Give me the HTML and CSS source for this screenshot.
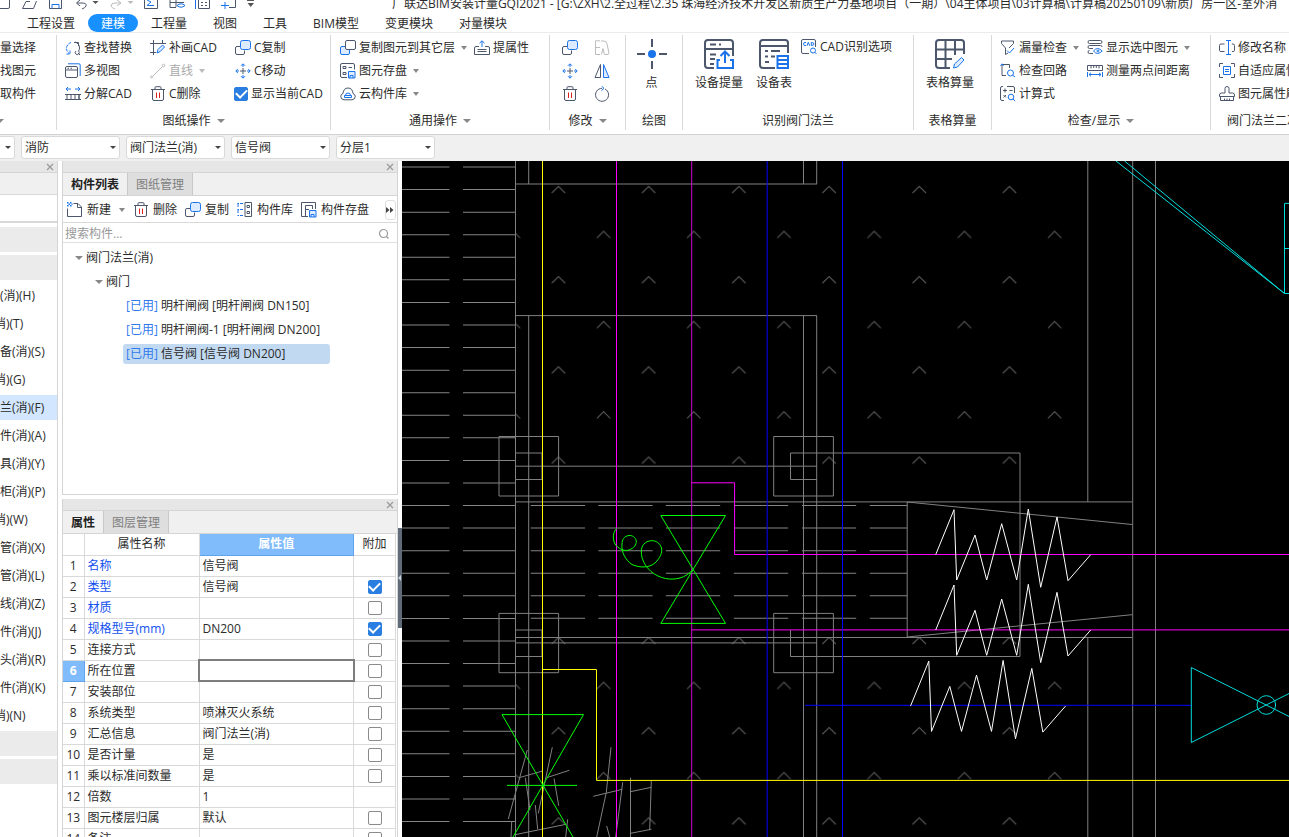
FILE: index.html
```html
<!DOCTYPE html>
<html lang="zh-CN">
<head>
<meta charset="utf-8">
<title>广联达BIM安装计量GQI2021</title>
<link rel="stylesheet" href="styles.css">
</head>
<body>
<svg class="defs" aria-hidden="true">
  <defs>
    <symbol id="i-find" viewBox="0 0 16 16"><path class="b" d="M6 2.500A6.500 6.500 0 0 0 1.500 8Q1.500 12 4.500 13.500M1.500 14H5V10.500" stroke-dasharray="3 1"/><path class="d" d="M9 2.500H13.500V6M10 2Q14.500 3.500 14.500 8Q14.500 10 13.500 11"/><path class="d" d="M13.500 11A2 2 0 1 1 11 11M13 13L15 15"/></symbol>
    <symbol id="i-views" viewBox="0 0 16 16"><rect class="d" x=".5" y="3.500" width="12" height="11" rx="1.500"/><path class="d" d="M.5 7H12.500M2.500 5.300H4M5.500 5.300H7"/><path class="b" d="M3 .8H14Q15.200.8 15.200 2V13"/></symbol>
    <symbol id="i-split" viewBox="0 0 16 16"><path class="b" d="M6 3H1M3 1L1 3L3 5M10 3H15M13 1L15 3L13 5"/><path class="d" d="M0 8.500H2V13.500H0M2 8.500H14V13.500H2M16 8.500H14V13.500H16M6 8.500V13.500M10 8.500V13.500"/></symbol>
    <symbol id="i-draw" viewBox="0 0 16 16"><path class="d" d="M3.500 0V15M0 3.500H16M12.500 0V4M0 12.500H6"/><path class="bf" d="M7 13L8 9.500L12.500 5L14.500 7L10 11.700Z"/></symbol>
    <symbol id="i-line" viewBox="0 0 16 16"><path class="g" d="M2.500 13.500L12.500 3.500"/><circle class="g" cx="1.500" cy="14" r="1"/><circle class="g" cx="13.500" cy="2.500" r="1.300"/></symbol>
    <symbol id="i-trash" viewBox="0 0 16 16"><path class="d" d="M1 3.500H15M5 3V1.500Q5 .7 6 .7H10Q11 .7 11 1.500V3M2.500 3.500V13Q2.500 14.500 4 14.500H12Q13.500 14.500 13.500 13V3.500"/><path class="r" d="M6.500 6.500V12M9.500 6.500V12"/></symbol>
    <symbol id="i-copy" viewBox="0 0 16 16"><path class="d" d="M5 6.500H2Q.5 6.500.5 8V13Q.5 14.500 2 14.500H8Q9.500 14.500 9.500 13V10.500"/><rect class="bf" x="5.500" y=".5" width="10" height="9" rx="2"/></symbol>
    <symbol id="i-copyl" viewBox="0 0 16 16"><rect class="bf" x=".5" y="6.500" width="9" height="8" rx="1.500"/><rect x="5.500" y=".5" width="10" height="9" rx="1.500" class="dw"/></symbol>
    <symbol id="i-move" viewBox="0 0 16 16"><path class="d" d="M8 5V11M5 8H11"/><path class="b" d="M8 4V1M6 2.800L8 .8L10 2.800M8 12V15M6 13.200L8 15.200L10 13.200M4 8H1M2.800 6L.8 8L2.800 10M12 8H15M13.200 6L15.200 8L13.200 10"/></symbol>
    <symbol id="i-disk" viewBox="0 0 16 16"><path class="d" d="M7 14.500H2Q.5 14.500.5 13V2Q.5.5 2 .5H13Q14.500.5 14.500 2V6.500M3 3.500H6V5.500H3ZM8.500 4.500H12M3 9.500H6V11.500H3Z"/><path class="bf" d="M8.500 8.500H15V15H8.500ZM10 15V12.500H13V15"/></symbol>
    <symbol id="i-cloud" viewBox="0 0 16 16"><path class="d" d="M4 13.800H12Q15.200 13.500 15.200 10.500Q15.200 8 13 7.500Q12.500 2 8 2Q3.500 2 3 7.500Q.8 8 .8 10.500Q.8 13.500 4 13.800Z"/><path class="b" d="M4.500 11.500H11.500V9.500H4.500ZM5.500 9.500Q5.500 7 8 7Q10.500 7 10.500 9.500"/></symbol>
    <symbol id="i-prop" viewBox="0 0 16 16"><path class="b" d="M8 7V1M5.500 3.200L8 .8L10.500 3.200"/><path class="d" d="M5 6.500H2Q.5 6.500.5 8V14.500H15.500V8Q15.500 6.500 14 6.500H11M3.500 9.500H12.500M3.500 11.500H12.500"/></symbol>
    <symbol id="i-copyx" viewBox="0 0 16 16"><path class="g" d="M6 .8H1.500V14.500H6M1.500 7.500H6M7 1H10Q12.500 1 13 4L15 13Q15 14.500 13 14.500H10.500L9 8.500L7.500 14.500"/></symbol>
    <symbol id="i-mirror" viewBox="0 0 16 16"><path class="d" d="M6.500 1.500V14.500H1Z"/><path class="bf" d="M9.500 1.500V14.500H15Z"/></symbol>
    <symbol id="i-rotate" viewBox="0 0 16 16"><path class="d" d="M8 2.300A6.500 6.500 0 1 0 11 3"/><path class="b" d="M7.500 0L10 2.300L7.500 4.500"/></symbol>
    <symbol id="i-cad" viewBox="0 0 16 16"><path class="d" d="M8 14.500H2Q.5 14.500.5 13V2Q.5.5 2 .5H13Q14.500.5 14.500 2V8"/><path class="b" d="M5 3.500Q2.500 2.800 2.500 5Q2.500 7 5 6.500M6 6.800L7.300 3.300L8.700 6.800M10.300 3.500V6.500Q13 6.500 13 5Q13 3.500 10.300 3.500"/><circle class="b" cx="12" cy="11.500" r="2.500"/><path class="b" d="M13.800 13.300L15.500 15"/></symbol>
    <symbol id="i-funnel" viewBox="0 0 16 16"><path class="d" d="M1.500 1H13.500V3.500L9 8M1.500 1V3.500L5.500 8V14.500L8 13"/><path class="b" d="M7 10.500L9.500 13L14 8"/></symbol>
    <symbol id="i-loop" viewBox="0 0 16 16"><path class="b" d="M.5 3L2 .8L3.500 3"/><path class="d" d="M2 2V12.500H6M3 1.500H9.500V5"/><circle class="b" cx="10.500" cy="10" r="3"/><path class="b" d="M12.500 12L15 14"/></symbol>
    <symbol id="i-calc" viewBox="0 0 16 16"><path class="d" d="M4 14.500H2Q.5 14.500.5 13V2Q.5.5 2 .5H3M7 .5H13Q14.500.5 14.500 2V7M3 4.500H7M5 2.500V6.500M9.500 4.500H12.500M3.500 9L6 11.500M6 9L3.500 11.500"/><circle class="b" cx="11" cy="11" r="2.800"/><path class="b" d="M13 13L15.200 15"/></symbol>
    <symbol id="i-show" viewBox="0 0 16 16"><path class="d" d="M2.500.5H13.500Q15 .5 15 2T13.500 3.500H2.500Q1 3.500 1 2T2.500.5M6 8.500H2.500Q1 8.500 1 7T2.500 5.500H13.500Q15 5.500 15 7M6 13.500H2.500Q1 13.500 1 12T2.500 10.500"/><path class="b" d="M6.500 11Q10.500 6 15.200 11Q10.500 16 6.500 11"/><circle class="b" cx="11" cy="11" r="1"/></symbol>
    <symbol id="i-ruler" viewBox="0 0 16 16"><path class="d" d="M.5 7.500V2.500H15.500V7.500ZM4 3V5.500M6.700 3V5M9.300 3V5M12 3V5.500"/><path class="b" d="M.5 9V14M15.500 9V14M2 11.500H14M4 9.800L2 11.500L4 13.300M12 9.800L14 11.500L12 13.300"/></symbol>
    <symbol id="i-rename" viewBox="0 0 16 16"><path class="d" d="M5.500 4H2Q.5 4 .5 5.500V10.500Q.5 11.500 2 11.500H5.500M13 4H14Q15.500 4 15.500 5.500V10.500Q15.500 11.500 14 11.500H13"/><path class="b" d="M7 .5H12M9.500 1V14.500M7 14.500H12"/></symbol>
    <symbol id="i-adapt" viewBox="0 0 16 16"><path class="d" d="M4 .5H.5V4M12 .5H15.500V4M4 14.500H.5V11M12 14.500H15.500V11"/><path class="b" d="M4.500 3.500H11.500V11.500H4.500ZM6 6.500H10M6 8.500H10"/></symbol>
    <symbol id="i-brush" viewBox="0 0 16 16"><path class="d" d="M6 7V2.500Q6 .5 8 .5T10 2.500V7H13.500Q15.500 7 15.500 9V10.500H.5V9Q.5 7 2.500 7ZM1.500 10.500V14.500H14.500V10.500M5.500 12.500V14.500M8 12.500V14.500M10.500 12.500V14.500"/></symbol>
    <symbol id="i-new" viewBox="0 0 16 16"><path class="d" d="M6.500 1.500H11L14.500 5V14.500H.5V6.500M10.500 1.500V5.500H14.500"/><path fill="#1a73e8" d="M0 0H1.500V1.500H0ZM3 0H4.500V1.500H3ZM1.500 1.500H3V3H1.500ZM4.500 1.500H5.500V3H4.500ZM0 3H1.500V4.500H0ZM3 3H4.500V4.500H3Z"/></symbol>
    <symbol id="i-lib" viewBox="0 0 16 16"><path class="d" d="M8 .5H14.500V14.500H8ZM10 3.500H12.500V5.500H10ZM10 9.500H12.500V11.500H10Z"/><path class="b" d="M.5 1.500H2M3 1.500H6M.5 7.500H2M3 7.500H6M.5 13.500H2M3 13.500H6M1 1.500V5M1 7.500V11"/></symbol>
    <symbol id="i-save" viewBox="0 0 16 16"><path class="d" d="M7 14.500H.5V.5H14.500V7M4.500 14.500V3.500H11.500V7M4.500 7.500H8"/><path class="bf" d="M8.500 8.500H15V15H8.500ZM10 15V12.500H13V15"/></symbol>
    <symbol id="i-close" viewBox="0 0 8 8"><path d="M1 1L7 7M7 1L1 7" stroke="#999" stroke-width="1.200" fill="none"/></symbol>
    <symbol id="i-search" viewBox="0 0 12 12"><circle cx="5.500" cy="5.500" r="4" stroke="#999" fill="none" stroke-width="1.200"/><path d="M8.500 8.500L10.500 10.500" stroke="#999" stroke-width="1.200"/></symbol>
  </defs>
</svg>

<header class="titlebar">
  <svg class="quick" width="260" height="12" viewBox="0 0 260 12" aria-hidden="true">
    <path class="d" d="M0 8.500H8Q9.500 8.500 9.500 7V0M22.500 8.500H33.500L36.500 1M22.500 8.500L26 1.500H30M49.500 0V8.500H61.500V0M77 3H82Q87 3 86 6Q85 8 82 9M80 0L76.500 3L80 6M144.500 0V8.500H157.500V0M170 7.500H176M170 0V7.500M176 0V7M170 2.500H184M198.500 0V8.500H209.500V0M201 2.500H203M205 2.500H207M201 5.500H203M205 5.500H207M229 7.500H235.500V0"/>
    <path class="b" d="M52 8.500V4.500H59V8.500M147 0L151 2L147 5.500H154M177 5.500Q181 2 185 5.500Q181 9 177 5.500M195.500 0V9M221 5.500H229M225 2V9"/>
    <path class="g" d="M121 3H115Q111 3 111 6Q112 8 115 9M117 0L121 3L117 6"/>
    <path fill="#555" d="M92.500 1H98.500L95.500 4ZM247.500 3H254L250.700 7ZM247 0H254V1H247Z"/><path fill="#bbb" d="M127.500 1H133.500L130.500 4Z"/>
  </svg>
  <span class="doc-title">广联达BIM安装计量GQI2021 - [G:\ZXH\2.全过程\2.35 珠海经济技术开发区新质生产力基地项目（一期）\04主体项目\03计算稿\计算稿20250109\新质厂房一区-室外消</span>
</header>

<nav class="tabs">
  <button>工程设置</button><button class="on">建模</button><button>工程量</button><button>视图</button><button>工具</button><button>BIM模型</button><button>变更模块</button><button>对量模块</button>
</nav>

<section class="ribbon">
  <div class="group g-select">
    <div class="rows"><button class="cmd">量选择</button><button class="cmd">找图元</button><button class="cmd">取构件</button></div>
    <button class="glabel" aria-label="选择"><i class="caret"></i></button>
  </div>
  <div class="group g-sheet">
    <div class="rows three">
      <button class="cmd"><svg><use href="#i-find"/></svg>查找替换</button><button class="cmd"><svg><use href="#i-draw"/></svg>补画CAD</button><button class="cmd"><svg><use href="#i-copy"/></svg>C复制</button>
      <button class="cmd"><svg><use href="#i-views"/></svg>多视图</button><button class="cmd" disabled><svg><use href="#i-line"/></svg>直线<i class="caret"></i></button><button class="cmd"><svg><use href="#i-move"/></svg>C移动</button>
      <button class="cmd"><svg><use href="#i-split"/></svg>分解CAD</button><button class="cmd"><svg><use href="#i-trash"/></svg>C删除</button><label class="cmd"><input type="checkbox" class="check" checked>显示当前CAD</label>
    </div>
    <button class="glabel">图纸操作<i class="caret"></i></button>
  </div>
  <div class="group g-common">
    <div class="rows two">
      <button class="cmd"><svg><use href="#i-copyl"/></svg>复制图元到其它层<i class="caret"></i></button><button class="cmd"><svg><use href="#i-prop"/></svg>提属性</button>
      <button class="cmd wide"><svg><use href="#i-disk"/></svg>图元存盘<i class="caret"></i></button>
      <button class="cmd wide"><svg><use href="#i-cloud"/></svg>云构件库<i class="caret"></i></button>
    </div>
    <button class="glabel">通用操作<i class="caret"></i></button>
  </div>
  <div class="group g-modify">
    <div class="rows pair">
      <button class="cmd" aria-label="复制"><svg><use href="#i-copy"/></svg></button><button class="cmd" aria-label="拉伸" disabled><svg><use href="#i-copyx"/></svg></button>
      <button class="cmd" aria-label="移动"><svg><use href="#i-move"/></svg></button><button class="cmd" aria-label="镜像"><svg><use href="#i-mirror"/></svg></button>
      <button class="cmd" aria-label="删除"><svg><use href="#i-trash"/></svg></button><button class="cmd" aria-label="旋转"><svg><use href="#i-rotate"/></svg></button>
    </div>
    <button class="glabel">修改<i class="caret"></i></button>
  </div>
  <div class="group g-point">
    <div class="bigs"><button class="big"><svg viewBox="0 0 30 30"><path class="D" d="M15 0V8M15 22V30M0 15H8M22 15H30"/><circle cx="15" cy="15" r="4" fill="#1a73e8"/></svg>点</button></div>
    <span class="glabel">绘图</span>
  </div>
  <div class="group g-device">
    <div class="bigs">
      <button class="big"><svg viewBox="0 0 30 30"><path class="D" d="M10 29H4Q1 29 1 26V4Q1 1 4 1H26Q29 1 29 4V17M1 10H29M6 5.500H12M15 5.500H17M6 15.500H12M6 20H11M6 25H10"/><path class="B" d="M16 21H13.500V29H29V21H26M21 24V13M16.500 17L21 12.500L25.500 17"/></svg>设备提量</button>
      <button class="big"><svg viewBox="0 0 30 30"><path class="D" d="M16 29H4Q1 29 1 26V4Q1 1 4 1H26Q29 1 29 4V14M1 7H29M6 12H9M12 12H21M6 17.500H9M12 17.500H16M6 23H10"/><path class="B" d="M18.500 17H29V29H18.500ZM18.500 21H29M18.500 25H29"/></svg>设备表</button>
      <button class="cmd"><svg><use href="#i-cad"/></svg>CAD识别选项</button>
    </div>
    <span class="glabel">识别阀门法兰</span>
  </div>
  <div class="group g-table">
    <div class="bigs"><button class="big"><svg viewBox="0 0 30 30"><path class="D" d="M15 29H4Q1 29 1 26V4Q1 1 4 1H26Q29 1 29 4V15M1 10.500H29M1 20H17M10.500 1V29M20 1V16"/><path class="bf" d="M18.500 29L19.500 25L26.500 18.500L29 21L22.500 28Z"/></svg>表格算量</button></div>
    <span class="glabel">表格算量</span>
  </div>
  <div class="group g-check">
    <div class="rows two">
      <button class="cmd"><svg><use href="#i-funnel"/></svg>漏量检查<i class="caret"></i></button><button class="cmd"><svg><use href="#i-show"/></svg>显示选中图元<i class="caret"></i></button>
      <button class="cmd"><svg><use href="#i-loop"/></svg>检查回路</button><button class="cmd"><svg><use href="#i-ruler"/></svg>测量两点间距离</button>
      <button class="cmd"><svg><use href="#i-calc"/></svg>计算式</button>
    </div>
    <button class="glabel">检查/显示<i class="caret"></i></button>
  </div>
  <div class="group g-valve">
    <div class="rows">
      <button class="cmd"><svg><use href="#i-rename"/></svg>修改名称</button>
      <button class="cmd"><svg><use href="#i-adapt"/></svg>自适应属性</button>
      <button class="cmd"><svg><use href="#i-brush"/></svg>图元属性刷</button>
    </div>
    <span class="glabel">阀门法兰二次</span>
  </div>
</section>

<section class="filters">
  <span class="pick first"><select aria-label="楼层"><option></option></select></span>
  <span class="pick"><select aria-label="专业"><option>消防</option></select></span>
  <span class="pick"><select aria-label="构件类型"><option>阀门法兰(消)</option></select></span>
  <span class="pick"><select aria-label="构件"><option>信号阀</option></select></span>
  <span class="pick"><select aria-label="分层"><option>分层1</option></select></span>
</section>

<main class="work">
  <aside class="nav">
    <div class="dock"><button aria-label="关闭"><svg><use href="#i-close"/></svg></button></div>
    <div class="nav-tab"></div>
    <div class="nav-tools"></div>
    <ul class="nav-list">
      <li class="bar"></li><li class="bar"></li>
      <li>(消)(H)</li><li class="cut">消)(T)</li><li>备(消)(S)</li><li class="cut">消)(G)</li><li class="on">兰(消)(F)</li><li>件(消)(A)</li><li>具(消)(Y)</li><li>柜(消)(P)</li><li class="cut">消)(W)</li><li>管(消)(X)</li><li>管(消)(L)</li><li>线(消)(Z)</li><li>件(消)(J)</li><li>头(消)(R)</li><li>件(消)(K)</li><li class="cut">消)(N)</li>
      <li class="bar"></li><li class="bar"></li>
    </ul>
  </aside>

  <div class="panels">
    <section class="panel parts">
      <div class="dock"><button aria-label="关闭"><svg><use href="#i-close"/></svg></button></div>
      <div class="ptabs"><button class="on">构件列表</button><button>图纸管理</button></div>
      <div class="tools">
        <button class="cmd"><svg><use href="#i-new"/></svg>新建<i class="caret"></i></button>
        <button class="cmd"><svg><use href="#i-trash"/></svg>删除</button>
        <button class="cmd"><svg><use href="#i-copy"/></svg>复制</button>
        <button class="cmd"><svg><use href="#i-lib"/></svg>构件库</button>
        <button class="cmd"><svg><use href="#i-save"/></svg>构件存盘</button>
        <button class="more" aria-label="更多"><svg viewBox="0 0 8 6"><path fill="#444" d="M0 0L3.500 3L0 6ZM4 0L7.500 3L4 6Z"/></svg></button>
      </div>
      <div class="search"><input type="text" placeholder="搜索构件..." aria-label="搜索构件"><svg><use href="#i-search"/></svg></div>
      <ul class="tree">
        <li class="l1"><i class="caret"></i>阀门法兰(消)</li>
        <li class="l2"><i class="caret"></i>阀门</li>
        <li class="l3"><b>[已用]</b> 明杆闸阀 [明杆闸阀 DN150]</li>
        <li class="l3"><b>[已用]</b> 明杆闸阀-1 [明杆闸阀 DN200]</li>
        <li class="l3 on"><b>[已用]</b> 信号阀 [信号阀 DN200]</li>
      </ul>
    </section>

    <section class="panel props">
      <div class="dock"><button aria-label="关闭"><svg><use href="#i-close"/></svg></button></div>
      <div class="ptabs"><button class="on">属性</button><button>图层管理</button></div>
      <div class="grid-wrap">
      <table class="grid">
        <colgroup><col class="c-no"><col class="c-name"><col><col class="c-add"></colgroup>
        <thead><tr><th></th><th>属性名称</th><th class="hot">属性值</th><th>附加</th></tr></thead>
        <tbody>
          <tr><td>1</td><td class="key">名称</td><td>信号阀</td><td></td></tr>
          <tr><td>2</td><td class="key">类型</td><td>信号阀</td><td><input type="checkbox" class="check" aria-label="类型" checked></td></tr>
          <tr><td>3</td><td class="key">材质</td><td></td><td><input type="checkbox" class="check" aria-label="材质"></td></tr>
          <tr><td>4</td><td class="key">规格型号(mm)</td><td>DN200</td><td><input type="checkbox" class="check" aria-label="规格型号" checked></td></tr>
          <tr><td>5</td><td>连接方式</td><td></td><td><input type="checkbox" class="check" aria-label="连接方式"></td></tr>
          <tr><td class="hot">6</td><td>所在位置</td><td class="edit"></td><td><input type="checkbox" class="check" aria-label="所在位置"></td></tr>
          <tr><td>7</td><td>安装部位</td><td></td><td><input type="checkbox" class="check" aria-label="安装部位"></td></tr>
          <tr><td>8</td><td>系统类型</td><td>喷淋灭火系统</td><td><input type="checkbox" class="check" aria-label="系统类型"></td></tr>
          <tr><td>9</td><td>汇总信息</td><td>阀门法兰(消)</td><td><input type="checkbox" class="check" aria-label="汇总信息"></td></tr>
          <tr><td>10</td><td>是否计量</td><td>是</td><td><input type="checkbox" class="check" aria-label="是否计量"></td></tr>
          <tr><td>11</td><td>乘以标准间数量</td><td>是</td><td><input type="checkbox" class="check" aria-label="乘以标准间数量"></td></tr>
          <tr><td>12</td><td>倍数</td><td>1</td><td></td></tr>
          <tr><td>13</td><td>图元楼层归属</td><td>默认</td><td><input type="checkbox" class="check" aria-label="图元楼层归属"></td></tr>
          <tr><td>14</td><td>备注</td><td></td><td><input type="checkbox" class="check" aria-label="备注"></td></tr>
        </tbody>
      </table>
      </div>
    </section>
  </div>

  <div class="splitter"><button aria-label="折叠面板"></button></div>

  <div class="canvas">
    <svg class="scene" role="img" aria-label="CAD图纸">
      <defs>
        <pattern id="tufts" patternUnits="userSpaceOnUse" x="490.900" y="180" width="90.200" height="90.200">
          <path d="M15.800 58L22.500 51.300L29.200 58M60.900 13L67.600 6.300L74.300 13" fill="none" stroke="#666"/>
        </pattern>
        <path id="zigzag" d="M935.700 554.700L954 509.700L956.700 580L975 535L986.700 580L1001.700 523.700L1016.700 580L1028.300 509L1040.700 587.300L1057 517L1068 580.700L1090.700 554.700"/>
      </defs>
      <g transform="translate(-402 -161)" fill="none">
        <path fill="url(#tufts)" d="M516 161H1087V501H516ZM516 637H1087V2000H516Z"/>
        <g stroke="#858585">
          <path stroke-width="47.500" stroke-dasharray="1 21.570" d="M425.700 166.500V2000"/>
          <path stroke-width="53" stroke-dasharray="1 21.570" d="M489.500 166.500V2000"/>
          <path stroke-width="54.300" stroke-dasharray="1 21.570" d="M557.900 505V619M625.500 505V619M693 505V619M761 505V619M829 505V619"/>
          <path stroke-width="37.500" stroke-dasharray="1 21.570" d="M888.500 505V619"/>
        </g>
        <g stroke="#808080">
          <path d="M515.500 161V2000M528.700 161V184M528.700 316V2000M803.500 161V184M803.500 316V2000M816.700 161V184M816.700 316V2000"/>
          <path d="M516 184H817M516 315.600H817M516 466.200H817M516 501.900H1132M516 637.500H1132M516 642.900H817"/>
          <path d="M499 436.500H558.600V496H499ZM516 453H542V479.500H516M499 613.400H558.600V672.700H499ZM516 630H542V656.500H516M773.700 436.500H833.400V496H773.700ZM773.700 613.400H833.400V672.700H773.700Z"/>
          <path d="M817 479.500H790.500V453H1020V656.500H790.500V630M1132 524.500L907.200 502V637L1132 614.700"/>
          <path d="M1087.800 161V501.700M1087.800 637V2000M1132.700 161V2000M1155.500 161V2000"/>
          <path d="M527.300 750L508.300 819M552.300 747.300L538.300 813.300M519 777.700L542.700 771M546.700 777.700L569.300 770.300M525.300 777.700L530 810M554 778.300L558.700 805.700M535.300 805L537.700 829.300M515 834.700L566 824.300M511.700 821.700L511 837M567.700 819.300L565.700 837M611 747.300L606.300 792.300L596.700 837M593.300 796.300L622.300 789.300M622.700 782.300L615.700 837M630.500 777.700V837M630.500 791.700L651.300 787.300M651.300 780.700L649.700 830M630.500 833.300L651.300 829.300M606.700 826L609.700 837"/>
        </g>
        <path stroke="#f0f" d="M616.500 161V2000"/>
        <path stroke="#d000d0" d="M691.700 161V2000"/>
        <path stroke="#f0f" d="M691.700 482.800H734.600V554.500H3000M691.700 629.900H3000"/>
        <path stroke="#00f" d="M767.200 161V2000M842.500 161V2000M805 705.300H1191"/>
        <path stroke="#ff0" d="M542.500 161V2000M542.500 669.500H596.500V780.400H3000"/>
        <g stroke="#0f0">
          <path d="M660.800 515.500H725.500L660.800 623.400H725.500ZM513 837L583.500 714.600H502L573 837M507 785.400H577"/>
          <path d="M616.700 528.300C613 532 612.500 538 614.500 543C618 549 624 551.500 629 550C634 548 636.500 545 636.300 541C635.500 537 632 535.200 629 535.500C624 536 622 540 622 544C621 551 625 560 632 564.500C640 568 649 568 655 563C660 558 662.500 553 661.500 548C660 543 656 540.500 651.300 540.700C645 541 641 546 641.300 552C641.300 559 645 566 651 571.500C660 579 671 580.500 680 578C685 576.500 689 574 693 569.500"/>
        </g>
        <g stroke="#fff"><use href="#zigzag"/><use href="#zigzag" y="75.300"/><use href="#zigzag" x="-25.200" y="151.400"/></g>
        <g stroke="#00dcdc">
          <path d="M1116 161L1284.500 293.500L1124.500 161M1300 203.400H1284.500V293.500H1300M1284.500 248.500H1300"/>
          <path d="M1341 742.500L1191.300 667.500V742.500L1341 667.500"/><circle cx="1266.300" cy="705" r="9.300"/>
        </g>
      </g>
    </svg>
  </div>
</main>
</body>
</html>
```

FILE: styles.css
```css
* { box-sizing: border-box; }

body {
  margin: 0;
  height: 100vh;
  display: flex;
  flex-direction: column;
  overflow: hidden;
  background: #fff;
  color: #2b2b2b;
  font: 12px/16px "Open Sans", "Noto Sans CJK SC", sans-serif;
}

button, input, select { font: inherit; color: inherit; }
button { padding: 0; border: 0; background: none; white-space: nowrap; }
ul { margin: 0; padding: 0; list-style: none; }
.defs { position: absolute; width: 0; height: 0; }

/* icon strokes */
.d, .b, .g, .r, .D, .B { fill: none; }
.d, .dw { stroke: #4c576b; stroke-width: 1; }
.dw { fill: #fff; }
.b { stroke: #1a73e8; stroke-width: 1; }
.bf { stroke: #1a73e8; stroke-width: 1; fill: #dcebff; }
.g { stroke: #bcbcbc; stroke-width: 1; }
.r { stroke: #e02020; stroke-width: 1; }
.D { stroke: #4c576b; stroke-width: 2; }
.B { stroke: #1a73e8; stroke-width: 2; }

.caret {
  flex: none;
  border: 3px solid transparent;
  border-top: 4px solid #888;
  border-bottom: 0;
}

.check {
  appearance: none;
  flex: none;
  width: 14px;
  height: 14px;
  margin: 0;
  border: 1px solid #8a8a8a;
  border-radius: 2px;
  background: #fff;
  display: grid;
  place-items: center;
}
.check:checked { background: #2a7de1; border-color: #2a7de1; }
.check:checked::after {
  content: "";
  width: 9px;
  height: 5px;
  border: solid #fff;
  border-width: 0 0 2px 2px;
  transform: rotate(-45deg);
  margin-bottom: 3px;
}

/* title */
.titlebar { flex: none; display: flex; height: 12px; overflow: hidden; }
.quick { flex: none; width: 260px; margin-right: 132px; }
.doc-title { white-space: nowrap; margin-top: -4px; }

/* menu tabs */
.tabs { flex: none; display: flex; height: 21px; padding: 2px 0 0 14px; border-bottom: 1px solid #ececec; }
.tabs button { height: 18px; padding: 1px 13px 0; }
.tabs .on { border-radius: 9px; background: #1890ff; color: #fff; }

/* ribbon */
.ribbon { flex: none; display: flex; height: 102px; padding: 2px 0 4px; border-bottom: 1px solid #d2d2d2; overflow: hidden; }
.group { flex: none; display: flex; flex-direction: column; justify-content: space-between; border-right: 1px solid #d9d9d9; }
.rows { display: grid; grid-auto-rows: 23px; padding: 1px 0 0 8px; justify-content: start; justify-items: start; }
.cmd { display: flex; align-items: center; gap: 3px; white-space: nowrap; }
.cmd svg { flex: none; width: 16px; height: 16px; }
.cmd .caret { margin-left: 3px; }
.cmd:disabled { color: #aaa; }
.cmd:disabled .caret { border-top-color: #bbb; }
.glabel { display: flex; align-items: center; justify-content: center; gap: 6px; height: 18px; white-space: nowrap; }
.glabel .caret { border-width: 4px 4px 0; }
.g-select { width: 57px; }
.g-select .rows { padding-left: 0; }
.g-select .glabel { justify-content: flex-start; margin-left: -4px; }
.g-sheet { width: 274px; }
.three { grid-template-columns: 85px 85px auto; }
.three label { margin-left: -1px; }
.g-common { width: 219px; }
.g-common .two { grid-template-columns: 134px auto; padding-left: 9px; }
.wide { grid-column: 1 / -1; }
.g-modify { width: 76px; }
.pair { grid-template-columns: 32px 16px; padding-left: 12px; }
.g-point { width: 57px; }
.g-device { width: 231px; }
.g-table { width: 78px; }
.g-check { width: 219px; }
.g-check .two { grid-template-columns: 87px auto; }
.g-valve { flex: 1 0 110px; border-right: 0; }
.g-valve .glabel { justify-content: flex-start; padding-left: 16px; }
.bigs { display: flex; justify-content: center; align-items: flex-start; gap: 13px; padding-top: 4px; }
.big { display: flex; flex-direction: column; align-items: center; gap: 6px; min-width: 30px; }
.big svg { width: 30px; height: 30px; }
.g-point .bigs { padding-right: 4px; }
.g-point .bigs, .g-table .bigs { padding-right: 5px; }
.g-device .bigs { justify-content: flex-start; padding-left: 12px; }
.g-device .bigs .cmd { margin-left: -4px; }

/* filter bar */
.filters { flex: none; display: flex; gap: 6px; height: 26px; padding-top: 1px; background: #f0f0f0; }
.pick { position: relative; width: 99px; height: 23px; }
.first { width: 15px; }
.pick select { appearance: none; width: 100%; height: 100%; padding: 0 3px; border: 1px solid #d9d9d9; border-radius: 3px; background: #fff; }
.first select { border-left: 0; border-radius: 0 3px 3px 0; }
.pick::after { content: ""; position: absolute; right: 4px; top: 10px; border: 3px solid transparent; border-top-color: #444; border-bottom: 0; }

/* work area */
.work { flex: 1; min-height: 0; display: flex; background: #fff; }
.dock { flex: none; display: flex; justify-content: flex-end; align-items: center; height: 12px; padding-right: 3px; background: #e6e6e6; border-bottom: 1px solid #d5d5d5; }
.dock button { display: flex; }
.dock svg { width: 8px; height: 8px; }

.nav { flex: none; width: 58px; border-right: 1px solid #d5d5d5; overflow: hidden; }
.nav-tab { height: 22px; background: #f0f0f0; border-bottom: 1px solid #d9d9d9; }
.nav-tools { height: 28px; border-bottom: 2px solid #d9d9d9; }
.nav-list { display: flex; flex-direction: column; gap: 3px; padding-top: 4px; }
.nav-list li { height: 25px; line-height: 26px; white-space: nowrap; }
.nav-list .bar { background: #ebebeb; }
.nav-list .on { background: #d2e7ff; }
.nav-list .cut { text-indent: -6px; }

.panels { flex: none; width: 336px; margin-left: 4px; display: flex; flex-direction: column; gap: 4px; }
.panel { display: flex; flex-direction: column; border: 1px solid #d5d5d5; border-top: 0; }
.parts { height: 334px; flex: none; }
.props { flex: 1; min-height: 0; overflow: hidden; border-bottom: 0; }
.ptabs { flex: none; display: flex; height: 23px; background: #f0f0f0; border-bottom: 1px solid #d5d5d5; }
.ptabs button { padding: 1px 8px 0; border-right: 1px solid #c6c8cc; background: #dedede; color: #808080; }
.ptabs .on { background: #f0f0f0; color: #222; font-weight: 700; }

.tools { flex: none; display: flex; align-items: center; gap: 8px; height: 27px; padding: 2px 1px 0 4px; border-bottom: 1px solid #d9d9d9; }
.tools .cmd .caret { margin-left: 4px; }
.tools .more { width: 11px; height: 20px; margin-left: auto; border: 1px solid #e0e0e0; border-radius: 3px; }
.tools .more svg { width: 8px; height: 6px; display: block; }
.tools .cmd { gap: 4px; }

.search { flex: none; display: flex; align-items: center; height: 20px; padding: 2px 7px 0 2px; border-bottom: 1px solid #e0e0e0; }
.search input { flex: 1; min-width: 0; border: 0; padding: 0; outline: 0; background: none; }
.search input::placeholder { color: #999; }
.search svg { width: 12px; height: 12px; }

.tree { padding-top: 5px; }
.tree li { display: flex; align-items: center; width: max-content; height: 20px; margin-bottom: 4px; white-space: pre; }
.tree .caret { margin-right: 3px; border-width: 4px 4px 0; }
.tree b { font-weight: 400; color: #2f7bea; }
.l1 { margin-left: 12px; }
.l2 { margin-left: 32px; }
.l3 { margin-left: 60px; padding: 0 3px; }
.tree .l3.on { width: 207px; border-radius: 3px; background: #c2d9f2; }

.grid { width: 333px; border-collapse: collapse; table-layout: fixed; }
.grid-wrap { flex: 1; min-height: 0; overflow: hidden; }
.c-no { width: 21px; }
.c-name { width: 115px; }
.c-add { width: 42px; }
.grid th, .grid td { height: 21px; padding: 0 3px; border: 1px solid #d9d9d9; border-width: 0 1px 1px 0; font-weight: 400; line-height: 20px; white-space: nowrap; }
.grid td:first-child { text-align: center; padding: 0; }
.grid td .check { margin: 0 auto; }
.grid .key { color: #1150f0; }
.grid .hot { background: #80bbfb; color: #fff; font-weight: 700; border-color: #5ea5ee; }
.grid .edit { outline: 2px solid #7d7d7d; outline-offset: -1px; }

.splitter { flex: none; width: 4px; display: flex; align-items: flex-start; padding-top: 367px; }
.splitter button { width: 4px; height: 100px; background: #5f6b78; display: flex; align-items: center; }
.splitter button::after { content: ""; border: 3px solid transparent; border-right-color: #c8ced5; border-left: 0; }

.canvas { flex: 1; min-width: 0; background: #000; overflow: hidden; }
.scene { display: block; width: 100%; height: 100%; }
```
